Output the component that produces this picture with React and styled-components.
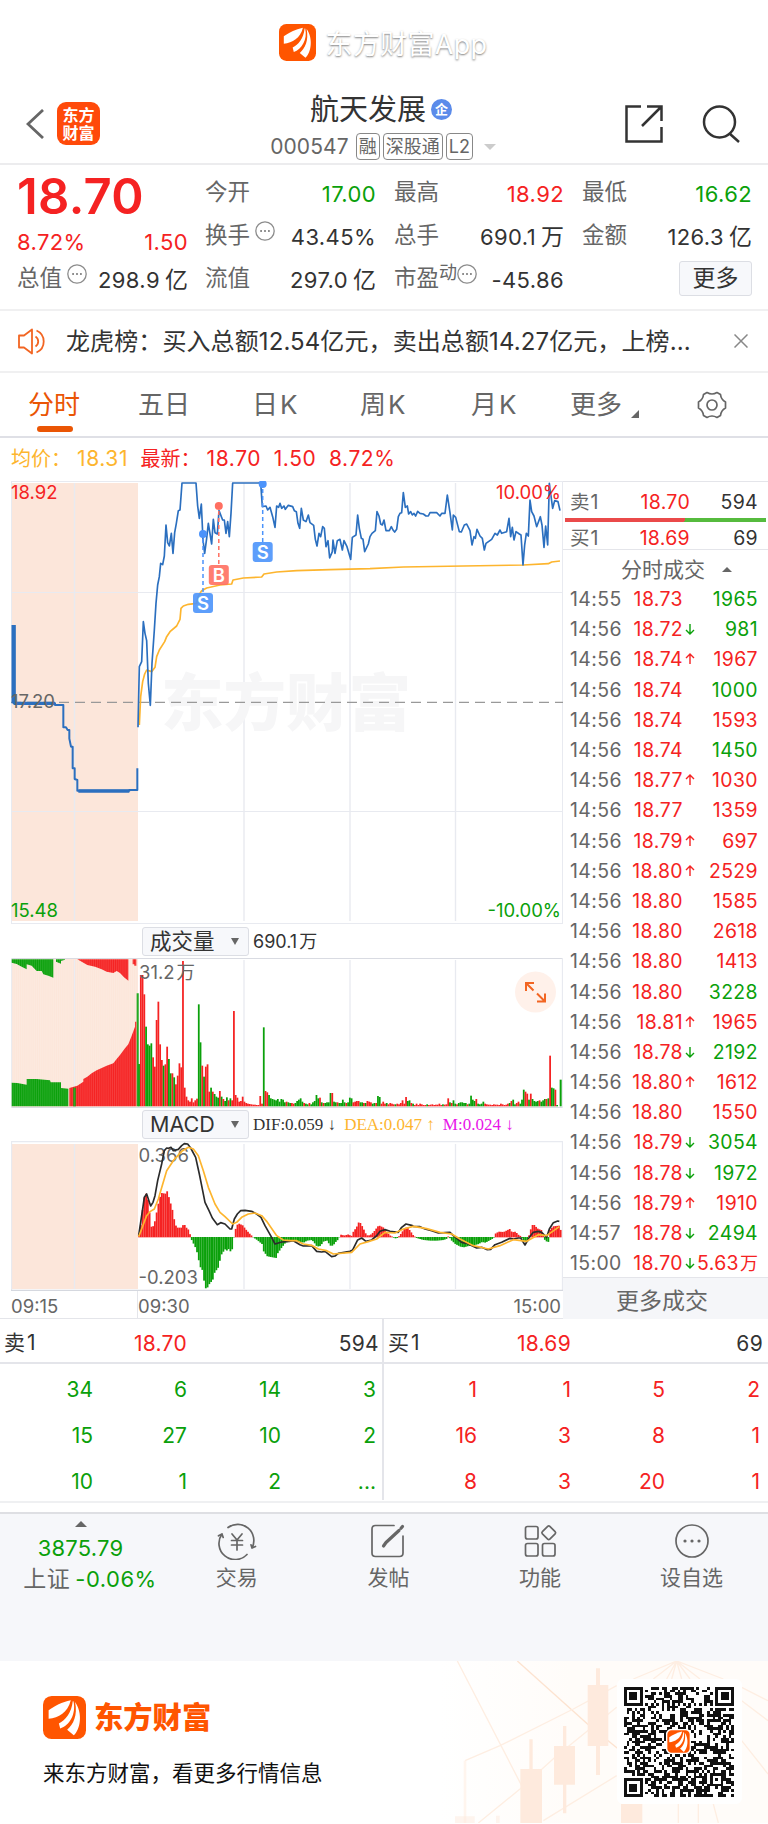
import React from 'react'
import styled, { createGlobalStyle } from 'styled-components'

const RED = '#f52222'
const GREEN = '#0aa00a'
const ORANGE = '#ff5500'
const DARK = '#333'
const GREY = '#666'
const LINE = '#e4e5ea'

const GlobalStyle = createGlobalStyle`
    *{
        box-sizing: border-box;
    }

    body{
        margin: 0;
        background: #fff;
        color: ${DARK};
        font-family: Inter, "Noto Sans CJK SC", sans-serif;
    }

    svg{
        display: block;
        flex: none;
    }
`

const Page = styled.div`
    width: 768px;
    height: 1824px;
    overflow: hidden;
    display: flex;
    flex-direction: column;
`

/* ---------- top ---------- */

const Brand = styled.div`
    height: 84px;
    display: flex;
    justify-content: center;
    align-items: center;
    gap: 10px;
    padding: 0 2px 0 0;

    span{
        font-size: 27px;
        line-height: 38px;
        color: #fff;
        letter-spacing: 0.3px;
        text-shadow: 0 1px 2px rgba(0,0,0,0.5);
        padding-top: 5px;
    }
`

const Header = styled.header`
    height: 81px;
    display: flex;
    align-items: flex-start;
    border-bottom: 2px solid #ececee;
    padding: 0 28px 0 26px;
`

const HeaderLeft = styled.div`
    width: 205px;
    display: flex;
    align-items: center;
    gap: 13px;
    padding-top: 18px;
`

const AppBadge = styled.div`
    width: 43px;
    height: 43px;
    border-radius: 9px;
    background: #ff4a0a;
    color: #fff;
    font-size: 16px;
    line-height: 18px;
    font-weight: 700;
    text-align: center;
    padding-top: 4px;
`

const HeaderMiddle = styled.div`
    width: 300px;
    display: flex;
    flex-direction: column;
    align-items: center;
`

const Title = styled.div`
    height: 47px;
    display: flex;
    align-items: center;
    gap: 5px;
    font-size: 29px;
    line-height: 40px;
    padding: 4px 0 0 0;

    i{
        width: 21px;
        height: 21px;
        margin-bottom: 1px;
        border-radius: 50%;
        background: #5b8bea;
        color: #fff;
        font: 700 13px/20px "Noto Sans CJK SC", sans-serif;
        text-align: center;
    }
`

const CodeRow = styled.div`
    display: flex;
    align-items: center;
    height: 31px;
    gap: 3px;
    color: ${GREY};
    padding-left: 4px;

    b{
        font-weight: 400;
        font-size: 21px;
        letter-spacing: 0.1px;
        margin-right: 4px;
    }
`

const Tag = styled.span`
    height: 27px;
    border: 1px solid #888;
    border-radius: 4px;
    padding: 0 2px;
    font-size: 18px;
    line-height: 25px;
    color: ${GREY};
`

const Triangle = styled.i`
    width: 0;
    height: 0;
    border: ${p => p.$w}px solid transparent;
    border-top: ${p => p.$up ? 0 : p.$h}px solid ${p => p.$color || GREY};
    border-bottom: ${p => p.$up ? p.$h : 0}px solid ${p => p.$color || GREY};
    margin-left: ${p => p.$left || 0}px;
`

const HeaderRight = styled.div`
    margin-left: auto;
    display: flex;
    gap: 38px;
    padding-top: 20px;
`

/* ---------- quote ---------- */

const Quote = styled.section`
    height: 144px;
    padding: 7px 16px 0 17px;
    display: grid;
    grid-template-columns: 171px 530px;
    column-gap: 17px;
    align-content: start;
`

const QuoteMain = styled.div`
    display: flex;
    flex-direction: column;
`

const BigPrice = styled.div`
    height: 49px;
    font-size: 49px;
    line-height: 49px;
    font-weight: 600;
    letter-spacing: 0.3px;
    color: ${RED};
`

const QuoteGrid = styled.div`
    display: grid;
    grid-template-columns: 171px 170px 170px;
    grid-auto-rows: 43px;
    column-gap: 18px;
`

const Pair = styled.div`
    height: ${p => p.$h || 43}px;
    display: flex;
    align-items: center;
    font-size: 22.5px;
    line-height: 30px;
    color: ${p => p.$color || DARK};

    label{
        color: ${GREY};
        padding-bottom: 3px;
    }

    sup{
        color: ${GREY};
        font-size: 18px;
        line-height: 20px;
        height: 33px;
    }

    svg{
        margin: 0 0 11px 5px;
    }

    sup + svg{
        margin-left: 0;
    }

    span{
        font-size: 22px;
        letter-spacing: 0.4px;
        white-space: nowrap;
    }

    span:last-child{
        margin-left: auto;
    }
`

const Unit = styled.small`
    font-size: ${p => p.$size || 23}px;
    line-height: 1px;
    letter-spacing: 0;
    margin-left: ${p => p.$gap || 5}px;
`

const MoreButton = styled.button`
    justify-self: end;
    align-self: center;
    width: 73px;
    height: 35px;
    margin-top: -3px;
    border: 1px solid #dcdee4;
    border-radius: 3px;
    background: #f7f8fb;
    color: ${DARK};
    font: 23px/31px Inter, "Noto Sans CJK SC", sans-serif;
    padding: 0;
`

/* ---------- news and tabs ---------- */

const News = styled.div`
    height: 64px;
    border-top: 2px solid #f0f0f1;
    border-bottom: 2px solid #f0f0f1;
    display: flex;
    align-items: center;
    padding: 0 20px 0 18px;

    p{
        margin: 0 auto 0 17px;
        padding-bottom: 3px;
        font-size: 24px;
        letter-spacing: 0.1px;
        white-space: nowrap;
    }
`

const Tabs = styled.nav`
    height: 65px;
    border-bottom: 2px solid #dfe0e6;
    display: flex;
    align-items: center;
    padding-left: 28px;
`

const Tab = styled.div`
    position: relative;
    width: ${p => p.$w}px;
    font-size: 26px;
    line-height: 63px;
    height: 63px;
    letter-spacing: ${p => p.$ls || 0}px;
    color: ${p => p.$active ? '#ea5504' : GREY};
    display: flex;
    white-space: pre;
`

const Underline = styled.i`
    position: absolute;
    left: 9px;
    bottom: 4px;
    width: 36px;
    height: 6px;
    border-radius: 3px;
    background: #ea5504;
`

const Corner = styled.i`
    width: 0;
    height: 0;
    border-left: 8px solid transparent;
    border-bottom: 8px solid ${GREY};
    margin: 37px 0 0 9px;
`

const Legend = styled.div`
    height: 43px;
    display: flex;
    align-items: center;
    padding: 0 0 2px 11px;
    font-size: 20px;
    line-height: 28px;
    color: ${RED};
`

const LegendItem = styled.span`
    color: ${p => p.$color || RED};
    margin-right: 12.5px;
    white-space: nowrap;

    b{
        font-weight: 400;
        font-size: 21px;
        letter-spacing: 0.6px;
        margin-left: ${p => p.$gap || 0}px;
    }
`

/* ---------- chart area ---------- */

const Market = styled.section`
    height: 838px;
    display: flex;
`

const Charts = styled.div`
    width: 563px;
    padding-left: 11px;
    display: flex;
    flex-direction: column;
    border-bottom: 1px solid ${LINE};

    text{
        font-family: Inter, "Noto Sans CJK SC", sans-serif;
        font-size: 18.5px;
    }
`

const Tools = styled.div`
    height: 34px;
    display: flex;
    align-items: center;
    padding: 1px 0 0 131px;
    font-size: 18px;
    white-space: nowrap;
`

const Select = styled.div`
    width: 107px;
    height: 29px;
    border: 1px solid #dcdee4;
    border-radius: 3px;
    background: #f7f8fb;
    display: flex;
    align-items: center;
    padding-left: 7px;
    font-size: 21.5px;
    line-height: 25px;
    margin-right: 4px;

    i{
        margin-left: auto;
        margin-right: 9px;
    }
`

const Indicator = styled.span`
    font: 17px/20px "Liberation Serif", serif;
    color: ${p => p.$color || DARK};
    margin-right: 8px;
`

const TimeAxis = styled.div`
    height: 27px;
    display: flex;
    font-size: 18.5px;
    line-height: 30px;
    color: ${GREY};

    span:first-child{
        width: 127px;
        border-right: 1px solid ${LINE};
    }

    span:last-child{
        margin-left: auto;
        margin-right: 2px;
    }
`

const Side = styled.aside`
    width: 205px;
    display: flex;
    flex-direction: column;
`

const Level = styled.div`
    height: ${p => p.$h}px;
    padding: ${p => p.$top}px 10px 0 7px;
    border-top: ${p => p.$line ? `1px solid ${LINE}` : 'none'};
    display: grid;
    grid-template-columns: 50px 70px 1fr;
    align-items: center;
    font-size: 19.5px;
    line-height: 24px;
    letter-spacing: 0.3px;
    color: ${GREY};

    span:first-child{
        letter-spacing: 1px;
    }

    span:nth-child(2){
        color: ${RED};
        text-align: right;
    }

    span:nth-child(3){
        color: ${DARK};
        text-align: right;
    }
`

const Ratio = styled.div`
    height: 4px;
    width: 201px;
    margin-left: 2px;
    background: linear-gradient(100deg, #ea4a4a 59.5%, #56bb3e 59.5%);
`

const SideTitle = styled.div`
    height: 34px;
    border-top: 1px solid ${LINE};
    padding: 6px 0 0 58px;
    font-size: 21px;
    line-height: 28px;
    color: ${GREY};
    display: flex;
    align-items: center;
`

const Ticks = styled.div`
    display: grid;
    grid-auto-rows: 30.2px;
    height: 694px;
`

const Tick = styled.div`
    display: grid;
    grid-template-columns: 56px 57px 13px 1fr;
    padding: 2px 10px 0 7px;
    align-items: center;
    font-size: 19.4px;
    line-height: 24px;
    letter-spacing: 0.4px;
    white-space: nowrap;
    color: ${p => p.$color};

    time{
        color: ${GREY};
    }

    b{
        font-weight: 400;
        color: ${RED};
        text-align: right;
    }

    em{
        font-style: normal;
        text-align: right;
        justify-self: end;
    }
`

const MoreTicks = styled.div`
    height: 42px;
    background: #f5f6f9;
    border-top: 1px solid ${LINE};
    color: ${GREY};
    font-size: 23px;
    line-height: 46px;
    padding-left: 53px;
`

/* ---------- order queue ---------- */

const Orders = styled.section`
    height: 184px;
    display: grid;
    grid-template-columns: 382px 386px;
    border-bottom: 2px solid #eff0f2;
`

const OrderSide = styled.div`
    border-left: ${p => p.$right ? `2px solid ${LINE}` : 'none'};
    color: ${p => p.$color};
    font-size: 21px;
    margin-bottom: 1px;
`

const OrderHead = styled.div`
    height: 45px;
    border-bottom: 2px solid ${LINE};
    padding: 6px 5px 0 4px;
    padding-right: ${p => p.$right ? 5 : 3}px;
    display: grid;
    grid-template-columns: 50px 133px 1fr;
    align-items: center;
    line-height: 28px;
    letter-spacing: 0.3px;
    color: ${DARK};

    span:first-child{
        letter-spacing: 2px;
        padding-bottom: 2px;
    }

    span:nth-child(2){
        color: ${RED};
        text-align: right;
    }

    span:nth-child(3){
        text-align: right;
    }
`

const Queue = styled.div`
    display: grid;
    grid-template-columns: 93px 94px 94px 95px;
    grid-auto-rows: 46px;
    padding-top: 3px;
    height: 136px;
    line-height: 46px;
    text-align: right;
`

/* ---------- bottom ---------- */

const BottomBar = styled.nav`
    height: 149px;
    margin-top: 9px;
    background: #f6f7fa;
    border-top: 2px solid #dedfe3;
    display: grid;
    grid-template-columns: 161px repeat(4, 151.6px);
`

const IndexBox = styled.div`
    display: flex;
    flex-direction: column;
    align-items: center;
    padding-top: 7px;
    font-size: 22px;
    color: ${GREEN};

    span{
        line-height: 30px;
        margin-top: 6px;
        letter-spacing: 0.2px;
        white-space: nowrap;
    }

    span + span{
        margin: 1px 0 0 19px;
        letter-spacing: 0.5px;
    }

    label{
        font-size: 23px;
        color: ${GREY};
        margin-right: 5px;
    }
`

const NavItem = styled.div`
    display: flex;
    flex-direction: column;
    align-items: center;
    padding-top: 8px;
    font-size: 21px;
    line-height: 30px;
    color: ${GREY};

    span{
        margin-top: 3px;
    }
`

const Footer = styled.footer`
    position: relative;
    height: 162px;
    display: flex;
    justify-content: space-between;
    padding: 18px 26px 0 43px;
    overflow: hidden;
    background: #fff;
`

const Backdrop = styled.svg`
    position: absolute;
    right: 0;
    top: 0;
`

const Slogan = styled.div`
    padding-top: 17px;

    div{
        display: flex;
        align-items: center;
        gap: 8px;
        font-size: 29.3px;
        line-height: 43px;
        font-weight: 900;
        color: #ff5500;
    }

    p{
        margin: 18px 0 0 0;
        font-size: 21.5px;
        line-height: 32px;
        color: #111;
    }
`

const QrCard = styled.div`
    position: relative;
    width: 125px;
    height: 125px;
    border-radius: 6px;
    background: #fff;
    padding: 8px 8px 7px 7px;
`

/* ---------- data ---------- */

const ticks = [
    ['14:55', '18.73', '', '1965', 0],
    ['14:56', '18.72', '↓', '981', 0],
    ['14:56', '18.74', '↑', '1967', 1],
    ['14:56', '18.74', '', '1000', 0],
    ['14:56', '18.74', '', '1593', 1],
    ['14:56', '18.74', '', '1450', 0],
    ['14:56', '18.77', '↑', '1030', 1],
    ['14:56', '18.77', '', '1359', 1],
    ['14:56', '18.79', '↑', '697', 1],
    ['14:56', '18.80', '↑', '2529', 1],
    ['14:56', '18.80', '', '1585', 1],
    ['14:56', '18.80', '', '2618', 1],
    ['14:56', '18.80', '', '1413', 1],
    ['14:56', '18.80', '', '3228', 0],
    ['14:56', '18.81', '↑', '1965', 1],
    ['14:56', '18.78', '↓', '2192', 0],
    ['14:56', '18.80', '↑', '1612', 1],
    ['14:56', '18.80', '', '1550', 1],
    ['14:56', '18.79', '↓', '3054', 0],
    ['14:56', '18.78', '↓', '1972', 0],
    ['14:56', '18.79', '↑', '1910', 1],
    ['14:57', '18.78', '↓', '2494', 0],
    ['15:00', '18.70', '↓', '5.63', 1, '万'],
]

const sells = ['34', '6', '14', '3', '15', '27', '10', '2', '10', '1', '2', '...']
const buys = ['1', '1', '5', '2', '16', '3', '8', '1', '8', '3', '20', '1']

// chart points are kept on a grid three times finer than the page
const priceLine = '24,772 28,590 35,575 40,455 45,490 50,512 55,640 61,706 66,580 73,480 78,400 83,345 88,320 92,280 98,284 103,258 108,165 113,218 118,228 124,190 129,250 134,188 139,160 145,122 150,120 156,39 198,39 203,108 208,145 214,102 219,210 224,250 230,205 235,160 245,222 250,148 255,188 262,192 267,122 278,150 283,150 288,190 293,155 298,200 303,130 308,39 385,39 392,38 397,110 408,108 413,120 420,112 428,140 435,172 440,108 446,112 450,100 455,115 462,108 466,118 475,106 488,110 493,122 499,125 504,160 509,175 514,115 520,150 528,155 535,135 540,158 551,166 556,208 561,228 567,190 572,200 578,170 583,175 588,230 594,212 599,264 607,245 609,210 615,250 622,212 630,208 637,240 642,212 651,230 662,268 667,202 678,195 683,135 688,175 694,205 699,208 704,245 715,222 720,200 726,190 736,182 741,125 747,138 752,162 757,165 762,150 768,182 778,182 784,170 789,180 794,186 800,178 805,140 810,130 815,128 820,68 826,112 832,108 836,132 842,125 847,135 852,130 857,138 863,124 870,130 880,132 888,138 895,138 900,128 920,128 930,138 935,130 945,130 952,75 960,128 967,180 970,135 977,142 988,185 994,186 1003,165 1010,162 1020,182 1026,225 1032,200 1036,205 1041,178 1050,198 1057,205 1063,240 1068,220 1085,208 1095,190 1102,195 1110,180 1115,190 1130,185 1137,145 1142,200 1147,172 1152,210 1158,185 1168,192 1173,195 1179,285 1184,225 1189,190 1195,198 1200,90 1205,125 1212,138 1220,170 1231,140 1236,165 1242,232 1247,168 1253,225 1258,40 1268,115 1274,92 1284,95 1290,122'
const avgLine = '28,765 32,680 38,635 44,612 50,600 65,605 75,592 80,560 88,540 104,515 110,500 120,485 140,468 150,448 153,415 160,408 175,403 200,400 204,380 215,362 230,354 270,345 305,342 309,330 340,324 395,321 402,312 440,306 500,302 600,299 720,296 820,291 1000,288 1180,285 1255,281 1265,276 1290,273'
const openLine = '41,465 41,700 165,700 165,705 190,705 190,772 198,772 203,780 208,780 208,806 213,830 218,830 218,895 224,895 224,927 232,930 232,962 388,962 388,960 412,960 412,895'

// one bar for each minute, r = up, g = down
const volumes = `g127 r394 r394 r336 g239 g186 g182 g189 r147 r119 r259 r314 r186 r139 g122 r126 r179 g142 g99 r99 g87 r66 r92 r129 r117
r436 r56 r29 r18 r14 r24 r12 r18 r23 g306 g192 r122 g89 r119 r126 r44 g56 r44 g37 g29 g26 r46 g29 r22 g16 g27 r18 g24 r18 r286 r34 r26 r14
r16 r29 r14 r10 r8 r7 r6 r5 r5 r4 r4 r31 r8 g237 r46 r42 g34 g24 g22 g20 g18 g22 g14 g22 g20 g12 r14 g12 g10 r10 r8 g10 g16 g20
g24 g14 r10 g8 g6 r10 g6 g12 g16 g34 g24 r26 g12 r10 g10 g12 g12 g40 r40 g14 g12 r12 g10 g10 g20 g12 r10 g12 g26 g24 r12 r14 r16 r16 g12 g12 r10 g10 r16 r14 r12 g8 g10 r10 g31 g28
r8 r14 r8 g10 r6 r10 r8 r6 g6 r8 r6 r10 r18 r8 r28 g16 g18 r10 g8 r4 r8 r4 r8 r6 r4 r4 g6 r4 r5 r6 r4 r5 r5 r8 r4 g6 r5 r6 r24 g12 r10 g18 g8 r6
g10 g12 g12 g10 g10 r6 g8 g32 g20 g16 r22 g8 g6 g8 g14 r8 r6 r5 r5 r4 r6 r5 r5 r4 r8 r6 r4 r5 r8 g10 r16 g20 g6 r10 r14 g8 g20 g50 r44 r38 g20 r38 g22 g16 g14 g16 r18 g14 g18 g22 r22 g24 r152 g56 g54 r50 g4`.trim().split(/\s+/)

const macd = [
    [417, 10], [422, 40], [427, 85], [432, 120], [437, 130], [442, 115], [448, 70], [453, 30], [458, 32], [463, 45], [469, 75], [474, 100], [479, 120],
    [484, 132], [495, 130], [501, 138], [506, 118], [511, 100], [516, 82], [521, 55], [526, 35], [532, 28], [543, 28], [548, 36], [553, 36], [558, 28],
    [563, 24], [569, 8], [574, -8], [579, -18], [585, -30], [590, -45], [595, -68], [601, -92], [606, -98], [611, -130], [616, -153], [622, -150],
    [627, -140], [637, -128], [643, -105], [653, -92], [659, -68], [664, -50], [674, -36], [679, -40], [685, -35], [690, -42], [696, -35], [701, 3],
    [706, 25], [711, 37], [716, 40], [727, 35], [737, 22], [748, 10], [757, 1], [769, -7], [785, -20], [790, -42], [801, -57], [827, -62], [832, -48],
    [843, -32], [854, -18], [870, -8], [880, -8], [890, -12], [910, -16], [920, -10], [935, -8], [943, -18], [950, -28], [960, -26], [970, -12],
    [980, -10], [990, -25], [998, -25], [1005, -15], [1012, -8], [1018, 2], [1023, 8], [1030, 4], [1045, 8], [1053, 2], [1060, 18], [1068, 28],
    [1075, 44], [1080, 42], [1088, 28], [1095, 12], [1102, 4], [1110, 6], [1120, 15], [1128, 26], [1135, 35], [1150, 28], [1160, 14], [1170, 4],
    [1180, -1], [1188, -4], [1198, 4], [1205, 15], [1215, 28], [1222, 28], [1230, 18], [1238, 6], [1246, -1], [1255, -4], [1270, -8], [1290, -10],
    [1310, -10], [1330, -8], [1340, -4], [1345, 4], [1352, -8], [1365, -20], [1380, -28], [1390, -30], [1405, -26], [1420, -24], [1435, -20],
    [1445, -14], [1455, -16], [1470, -8], [1480, -2], [1485, 10], [1495, 16], [1510, 15], [1528, 24], [1535, 14], [1545, 16], [1555, 6], [1562, 2],
    [1570, -12], [1580, -16], [1588, 12], [1595, 36], [1603, 36], [1610, 26], [1625, 20], [1630, -4], [1638, -12], [1645, -14], [1648, 20],
    [1658, 32], [1676, 34], [1682, 18],
]
const difLine = '416,965 425,905 433,850 440,840 445,855 452,876 459,865 465,845 473,800 485,750 493,710 500,702 506,703 513,700 520,710 535,706 545,695 553,689 563,690 572,702 587,730 598,780 605,815 615,865 627,890 637,912 652,932 662,926 675,930 690,945 695,945 703,915 712,900 722,890 735,889 755,892 770,900 783,910 795,935 812,965 825,990 845,984 868,982 880,980 900,992 910,996 935,995 950,1012 965,1014 975,1012 995,1028 1005,1026 1015,1018 1050,1012 1058,1008 1073,978 1085,972 1098,982 1115,978 1130,965 1140,952 1155,947 1170,952 1195,955 1205,940 1218,930 1235,934 1240,937 1260,938 1275,945 1295,950 1315,957 1335,956 1350,955 1360,965 1385,985 1400,988 1430,1002 1445,1000 1462,1007 1472,1006 1485,992 1505,985 1530,973 1540,975 1555,972 1562,972 1575,993 1588,970 1600,955 1615,952 1625,955 1640,970 1648,945 1660,926 1673,921 1678,922'
const deaLine = '416,968 425,945 440,905 450,893 463,885 475,855 500,770 520,740 545,712 565,700 580,705 595,725 610,770 625,820 645,870 660,895 675,908 698,930 710,925 725,910 745,900 765,897 785,905 800,922 830,965 850,978 870,980 890,980 910,990 935,994 955,1005 980,1010 1000,1020 1055,1015 1080,990 1105,983 1130,975 1155,955 1185,957 1210,945 1240,937 1280,944 1320,955 1355,960 1380,975 1420,995 1465,1005 1500,995 1540,977 1580,982 1615,962 1640,965 1678,938'

const valueAt = x => {
    const i = macd.findIndex(p => p[0] >= x)
    if (i <= 0) return macd[0][1]
    const [x0, y0] = macd[i - 1]
    const [x1, y1] = macd[i]
    return y0 + (y1 - y0) * (x - x0) / (x1 - x0)
}

/* ---------- small drawings ---------- */

const Feathers = ({ size, ring }) => (
    <svg width={size} height={size} viewBox="0 0 130 130">
        <rect x={ring ? 3 : 0} y={ring ? 3 : 0} width={ring ? 124 : 130} height={ring ? 124 : 130} rx="26" fill={ORANGE} stroke="#fff" strokeWidth={ring ? 8 : 0} />
        <g fill="#fff">
            <path d="M84 13C58 18 34 31 17 43L17 69C47 66 75 50 84 13Z" />
            <path d="M90 16C86 52 68 73 48 83L52 98C80 90 101 54 92 16Z" />
            <path d="M97 18C105 58 92 86 73 102L93 119C113 101 121 52 97 18Z" />
        </g>
    </svg>
)

const Info = () => (
    <svg width="20" height="20" viewBox="0 0 20 20" fill="none" stroke="#8c8c8c">
        <circle cx="10" cy="10" r="9.2" strokeWidth="1.3" />
        <path d="M5.2 10h1.8M9.1 10h1.8M13 10h1.8" strokeWidth="1.8" />
    </svg>
)

const Marker = ({ x, y, to, color, text }) => (
    <g>
        <circle cx={x} cy={y} r="4" fill={color} />
        <path d={`M${x} ${y + 5}V${to}`} stroke={color} strokeWidth="1.5" strokeDasharray="4 3" />
        <rect x={x - 10} y={to} width="20" height="20" rx="3" fill={color} opacity="0.9" />
        <text x={x} y={to + 16.5} fill="#fff" textAnchor="middle" fontWeight="600">{text}</text>
    </g>
)

const PriceChart = () => (
    <svg width="552" height="443" viewBox="11 481 552 443">
        <rect x="11" y="483" width="127" height="438" fill="#fce6da" />
        <g stroke="#e8eaf0" strokeWidth="1">
            <path d="M11 481.5H563M11 592.5H563M11 811.5H563M11 923.5H563M11.5 481V924M562.5 481V924" />
            <path d="M74.5 483V921M244 483V921M350 483V921M455.5 483V921" strokeWidth="1.4" />
        </g>
        <text x="161" y="726" style={{ fontSize: 62.5, fontWeight: 800 }} fill="#f6f6f7">东方财富</text>
        <path d="M11 702.3H563" stroke="#999" strokeWidth="1.2" strokeDasharray="10 6" />
        <g transform="translate(0 470) scale(0.33333)" fill="none" stroke="#2b6fbf" strokeLinejoin="round">
            <polyline points={openLine} strokeWidth="6" />
            <path d="M41 465V700" strokeWidth="13" />
            <path d="M41 700H165M235 963H388" strokeWidth="10" />
            <g transform="translate(390 0)" strokeWidth="5">
                <polyline points={avgLine} stroke="#fdb52e" />
                <polyline points={priceLine} />
            </g>
        </g>
        <Marker x={203} y={534} to={593} color="#4b93fb" text="S" />
        <Marker x={218.8} y={506} to={565} color="#ff6f61" text="B" />
        <Marker x={262.7} y={484} to={542} color="#4b93fb" text="S" />
        <text x="11" y="499" fill={RED}>18.92</text>
        <text x="11" y="708" fill={GREY}>17.20</text>
        <text x="11" y="917" fill={GREEN}>15.48</text>
        <text x="561" y="499" fill={RED} textAnchor="end">10.00%</text>
        <text x="561" y="917" fill={GREEN} textAnchor="end">-10.00%</text>
    </svg>
)

const VolumeChart = () => (
    <svg width="552" height="150" viewBox="11 958 552 150">
        <defs>
            <pattern id="gaps" width="1.9" height="10" patternUnits="userSpaceOnUse">
                <rect width="0.4" height="10" fill="#fff" opacity="0.5" />
            </pattern>
        </defs>
        <rect x="11" y="959" width="127" height="148" fill="#fce6da" />
        <path d="M11 958.5H563M11 1107.5H563" stroke="#d9dbe2" />
        <path d="M11.5 958V1108M74.5 960V1107M244 960V1107M350 960V1107M455.5 960V1107M562.5 958V1108" stroke="#e8eaf0" strokeWidth="1.3" />
        <g transform="translate(0 915) scale(0.33333)">
            <path fill={GREEN} d="M35 574V503L52 504L80 509V492H110L150 496L152 502H183V519L205 521V574Z M35 133V143L50 147L65 155L80 163V148L95 152L110 168H125L130 178L145 182L160 188V133Z M168 133V140L183 146V138L195 134V133Z M410 574V235H416V574Z" />
            <path fill={RED} d="M208 574V519L232 512L250 500V492L262 485L275 475L290 466L320 452L340 445L350 432L360 420L375 400L385 388L395 362L405 335V320H409V574Z M232 133L262 150L285 155L305 163L320 170L340 174L350 168L360 174L372 187L385 197V133Z M398 133V148H403V152H409V133Z" />
            <path fill={GREEN} d="M220 518H227V574H220Z" />
        </g>
        <rect x="11" y="959" width="127" height="148" fill="url(#gaps)" opacity="0.6" />
        <g transform="translate(0 915) scale(0.33333)">
            {volumes.map((v, i) => (
                <rect key={i} x={414.5 + i * 5.27} y={574 - v.slice(1)} width="5.3" height={v.slice(1)} fill={v[0] === 'r' ? RED : GREEN} />
            ))}
            <rect x="1679" y="494" width="6" height="80" fill={GREEN} />
        </g>
        <text x="139" y="979" fill={GREY}>31.2<tspan dx="2">万</tspan></text>
        <circle cx="535.5" cy="992" r="20.5" fill="#fff1ea" />
        <path d="M526 991V983H534M526.5 983.5L533.5 990.5M545 993.500V1001.500H537M544.500 1001L537 993.500" fill="none" stroke="#f26522" strokeWidth="2" />
    </svg>
)

const MacdChart = () => {
    const bars = []
    for (let x = 416; x < 1684; x += 5.27) {
        const v = valueAt(Math.min(x, 1682))
        bars.push(<rect key={x} x={x - 1.5} y={v > 0 ? 969 - v : 969} width="5.4" height={Math.abs(v) + 1} fill={v > 0 ? RED : GREEN} />)
    }
    return (
        <svg width="552" height="150" viewBox="11 1142 552 150">
            <rect x="11" y="1145" width="127" height="145" fill="#fce6da" />
            <path d="M11 1142.5H563M11.5 1142V1291M74.5 1145V1290M244 1145V1290M350 1145V1290M455.5 1145V1290M562.5 1142V1292" stroke="#e8eaf0" strokeWidth="1.3" />
            <path d="M11 1291.500H563" stroke="#d5d8df" strokeWidth="1.5" />
            <text x="138.500" y="1163" fill={GREY}>0.366</text>
            <text x="138.500" y="1285" fill={GREY}>-0.203</text>
            <g transform="translate(0 915) scale(0.33333)" fill="none" strokeWidth="5" strokeLinejoin="round">
                {bars}
                <polyline points={difLine} stroke="#2b2b2b" />
                <polyline points={deaLine} stroke="#fdb52e" />
            </g>
        </svg>
    )
}

const N = 41

const finderCell = (x, y) => {
    const d = Math.max(Math.abs(x - 3), Math.abs(y - 3))
    return d !== 2 && d < 4
}

const qrCells = () => {
    let seed = 547
    let d = ''
    for (let y = 0; y < N; y++) {
        for (let x = 0; x < N; x++) {
            seed = (seed * 1103515245 + 12345) % 2147483648
            let on = (seed / 2147483648) > 0.48
            const fx = x > N - 9 ? x - (N - 7) : x
            const fy = y > N - 9 ? y - (N - 7) : y
            if (fx < 8 && fy < 8 && !(x > N - 9 && y > N - 9)) on = finderCell(fx, fy)
            else if (Math.abs(x - 34) < 3 && Math.abs(y - 34) < 3) on = Math.max(Math.abs(x - 34), Math.abs(y - 34)) !== 1
            else if (x === 6 || y === 6) on = (x + y) % 2 === 0
            if (on) d += `M${x} ${y}h1v1h-1z`
        }
    }
    return d
}

const Qr = () => (
    <svg width="110" height="110" viewBox="0 0 41 41" shapeRendering="crispEdges">
        <path d={qrCells()} fill="#111" />
    </svg>
)

const QrLogo = styled.div`
    position: absolute;
    left: 49px;
    top: 50px;
`

const Art = () => (
    <Backdrop width="328" height="162" viewBox="0 21 984 486">
        <defs>
            <linearGradient id="warm">
                <stop offset="0" stopColor="#fff" />
                <stop offset="0.4" stopColor="#fffcf9" />
            </linearGradient>
        </defs>
        <rect y="21" width="984" height="486" fill="url(#warm)" />
        <g stroke="#feeee2" strokeWidth="4" fill="none">
            <path d="M232 21L445 212L560 305" stroke="#fde3d0" />
            <path d="M52 21L245 395M75 320L180 275L400 165L530 95M115 507L240 405L345 310L530 160M310 500L530 365M710 21L580 75M710 21L640 75M710 21L680 75M710 21L695 75M710 21L725 75M710 21L750 75M710 21L780 75M710 21L850 75M905 100L984 140M905 140L984 200M905 260L984 360M715 450V507M775 450V507M820 450L835 507" />
            <path d="M75 320V507" strokeWidth="8" stroke="#fff5ee" />
        </g>
        <g fill="#feeadd">
            <path d="M468 43H480V93H505V276H480V363H468V276H443V93H468Z" />
            <path d="M369 216H379V276H405V392H379V478H369V392H342V276H369Z" />
            <path d="M268 256H278V345H306V507H241V345H268Z" />
            <path d="M543 450H607V507H543Z" />
            <path d="M168 485H179V507H168ZM45 487H104V507H45Z" opacity="0.5" />
        </g>
    </Backdrop>
)

const stroke = { fill: 'none', stroke: '#666', strokeWidth: 1.7, strokeLinecap: 'round', strokeLinejoin: 'round' }

const TradeIcon = () => (
    <svg width="42" height="38" viewBox="0 0 42 38" {...stroke}>
        <path d="M12 5.500A16.200 16.200 0 0 1 36 26M36 26L39.500 24.500M36 26L35 22.800" />
        <path d="M31 32.500A16.200 16.200 0 0 1 6 12M6 12L2.500 13.800M6 12L7.200 15.500" />
        <path d="M16 12L21 18L26 12M21 18V28M15.500 18.500H26.500M15.500 23H26.500" />
    </svg>
)

const PostIcon = () => (
    <svg width="38" height="38" viewBox="0 0 38 38" {...stroke}>
        <path d="M25 3.500H6.500Q3 3.500 3 7V31Q3 34.500 6.500 34.500H30.500Q34 34.500 34 31V14" />
        <path d="M33.500 4.500L32 6.200M30 8.500L17 20.500L14.500 24" strokeWidth="3.200" />
    </svg>
)

const GridIcon = () => (
    <svg width="38" height="38" viewBox="0 0 38 38" {...stroke}>
        <rect x="4.500" y="4.500" width="12.500" height="12.500" rx="2" />
        <rect x="4.500" y="21.500" width="12.500" height="12.500" rx="2" />
        <rect x="21.500" y="21.500" width="12.500" height="12.500" rx="2" />
        <rect x="22.500" y="5.500" width="10.500" height="10.500" rx="1.500" transform="rotate(45 27.750 10.750)" />
    </svg>
)

const DotsIcon = () => (
    <svg width="38" height="38" viewBox="0 0 38 38" {...stroke}>
        <circle cx="19" cy="19" r="16" />
        <path d="M12 19h.01M19 19h.01M26 19h.01" strokeWidth="3.200" />
    </svg>
)

const App = () => {
    return (
        <Page>
            <GlobalStyle />
            <Brand>
                <Feathers size={37} />
                <span>东方财富App</span>
            </Brand>

            <Header>
                <HeaderLeft>
                    <svg width="18" height="30" viewBox="0 0 18 30" fill="none" stroke="#666" strokeWidth="2.800">
                        <path d="M17 1L2 15L17 29" />
                    </svg>
                    <AppBadge>东方<br />财富</AppBadge>
                </HeaderLeft>
                <HeaderMiddle>
                    <Title>航天发展<i>企</i></Title>
                    <CodeRow>
                        <b>000547</b>
                        <Tag>融</Tag>
                        <Tag>深股通</Tag>
                        <Tag>L2</Tag>
                        <Triangle $w={6} $h={6} $color="#ccc" $left={8} />
                    </CodeRow>
                </HeaderMiddle>
                <HeaderRight>
                    <svg width="40" height="40" viewBox="0 0 40 40" fill="none" stroke="#333" strokeWidth="2.500">
                        <path d="M17 2.500H2.500V37.500H37.500V23M23 2.500H37.500V17M37 3L18 22" />
                    </svg>
                    <svg width="38" height="40" viewBox="0 0 38 40" fill="none" stroke="#333" strokeWidth="2.500">
                        <circle cx="17.500" cy="18" r="15.500" />
                        <path d="M27.500 29.500L37 38" />
                    </svg>
                </HeaderRight>
            </Header>

            <Quote>
                <QuoteMain>
                    <BigPrice>18.70</BigPrice>
                    <Pair $h={42} $color={RED}><span>8.72%</span><span>1.50</span></Pair>
                    <Pair $h={33}><label>总值</label><Info /><span>298.9<Unit>亿</Unit></span></Pair>
                </QuoteMain>
                <QuoteGrid>
                    <Pair $color={GREEN}><label>今开</label><span>17.00</span></Pair>
                    <Pair $color={RED}><label>最高</label><span>18.92</span></Pair>
                    <Pair $color={GREEN}><label>最低</label><span>16.62</span></Pair>
                    <Pair><label>换手</label><Info /><span>43.45%</span></Pair>
                    <Pair><label>总手</label><span>690.1<Unit>万</Unit></span></Pair>
                    <Pair><label>金额</label><span>126.3<Unit>亿</Unit></span></Pair>
                    <Pair><label>流值</label><span>297.0<Unit>亿</Unit></span></Pair>
                    <Pair><label>市盈</label><sup>动</sup><Info /><span>-45.86</span></Pair>
                    <MoreButton>更多</MoreButton>
                </QuoteGrid>
            </Quote>

            <News>
                <svg width="31" height="27" viewBox="0 0 31 27" fill="none" stroke="#f26522" strokeWidth="1.800" strokeLinejoin="round">
                    <path d="M1 7.500V19.500H6L14 25.500V1.500L6 7.500Z" />
                    <path d="M17.500 8.500A6 6 0 0 1 17.500 18.500M18.500 2.500A12 12 0 0 1 18.500 24.500" />
                </svg>
                <p>龙虎榜：买入总额12.54亿元，卖出总额14.27亿元，上榜...</p>
                <svg width="14" height="14" viewBox="0 0 14 14" stroke="#888" strokeWidth="1.500">
                    <path d="M0.500 0.500L13.500 13.500M13.500 0.500L0.500 13.500" />
                </svg>
            </News>

            <Tabs>
                <Tab $w={110} $active>分时<Underline /></Tab>
                <Tab $w={114}>五日</Tab>
                <Tab $w={108} $ls={2}>日K</Tab>
                <Tab $w={111} $ls={2}>周K</Tab>
                <Tab $w={99} $ls={2}>月K</Tab>
                <Tab $w={127}>更多<Corner /></Tab>
                <svg width="30" height="30" viewBox="0 0 30 30" fill="none" stroke="#666" strokeWidth="1.700" strokeLinejoin="round">
                    <path d="M10 2.500Q15 5.500 20 2.500L23.500 4.500Q24 9.500 28.500 12V18Q24 20.500 23.500 25.500L20 27.500Q15 24.500 10 27.500L6.500 25.500Q6 20.500 1.500 18V12Q6 9.500 6.500 4.500Z" />
                    <circle cx="15" cy="15" r="5" />
                </svg>
            </Tabs>

            <Legend>
                <LegendItem $color="#fdb52e" $gap={6}>均价：<b>18.31</b></LegendItem>
                <LegendItem $gap={6}>最新：<b>18.70</b></LegendItem>
                <LegendItem><b>1.50</b></LegendItem>
                <LegendItem><b>8.72%</b></LegendItem>
            </Legend>

            <Market>
                <Charts>
                    <PriceChart />
                    <Tools>
                        <Select>成交量<Triangle $w={4.5} $h={7} /></Select>
                        <span>690.1<Unit $size={18} $gap={2}>万</Unit></span>
                    </Tools>
                    <VolumeChart />
                    <Tools>
                        <Select>MACD<Triangle $w={4.5} $h={7} /></Select>
                        <Indicator>DIF:0.059 ↓</Indicator>
                        <Indicator $color="#fdb52e">DEA:0.047 ↑</Indicator>
                        <Indicator $color="#e815e8">M:0.024 ↓</Indicator>
                    </Tools>
                    <MacdChart />
                    <TimeAxis>
                        <span>09:15</span>
                        <span>09:30</span>
                        <span>15:00</span>
                    </TimeAxis>
                </Charts>
                <Side>
                    <Level $h={38} $top={3} $line><span>卖1</span><span>18.70</span><span>594</span></Level>
                    <Ratio />
                    <Level $h={27} $top={4}><span>买1</span><span>18.69</span><span>69</span></Level>
                    <SideTitle>分时成交<Triangle $up $w={5} $h={5} $left={17} /></SideTitle>
                    <Ticks>
                        {ticks.map((t, i) => (
                            <Tick key={i} $color={t[4] ? RED : GREEN}>
                                <time>{t[0]}</time>
                                <b>{t[1]}</b>
                                <svg width="13" height="14" viewBox="0 0 13 14" fill="none" stroke={t[2] === '↓' ? GREEN : RED} strokeWidth="1.400">
                                    {t[2] === '↓' && <path d="M7 2V12M3 8L7 12L11 8" />}
                                    {t[2] === '↑' && <path d="M7 12V2M3 6L7 2L11 6" />}
                                </svg>
                                <em>{t[3]}{t[5] && <Unit $size={18} $gap={1}>{t[5]}</Unit>}</em>
                            </Tick>
                        ))}
                    </Ticks>
                    <MoreTicks>更多成交</MoreTicks>
                </Side>
            </Market>

            <Orders>
                <OrderSide $color={GREEN}>
                    <OrderHead><span>卖1</span><span>18.70</span><span>594</span></OrderHead>
                    <Queue>{sells.map((n, i) => <span key={i}>{n}</span>)}</Queue>
                </OrderSide>
                <OrderSide $color={RED} $right>
                    <OrderHead $right><span>买1</span><span>18.69</span><span>69</span></OrderHead>
                    <Queue>{buys.map((n, i) => <span key={i}>{n}</span>)}</Queue>
                </OrderSide>
            </Orders>

            <BottomBar>
                <IndexBox>
                    <Triangle $up $w={6} $h={6} />
                    <span>3875.79</span>
                    <span><label>上证</label>-0.06%</span>
                </IndexBox>
                <NavItem><TradeIcon /><span>交易</span></NavItem>
                <NavItem><PostIcon /><span>发帖</span></NavItem>
                <NavItem><GridIcon /><span>功能</span></NavItem>
                <NavItem><DotsIcon /><span>设自选</span></NavItem>
            </BottomBar>

            <Footer>
                <Art />
                <Slogan>
                    <div><Feathers size={43} />东方财富</div>
                    <p>来东方财富，看更多行情信息</p>
                </Slogan>
                <QrCard>
                    <Qr />
                    <QrLogo><Feathers size={25} ring /></QrLogo>
                </QrCard>
            </Footer>
        </Page>
    )
}

export default App
